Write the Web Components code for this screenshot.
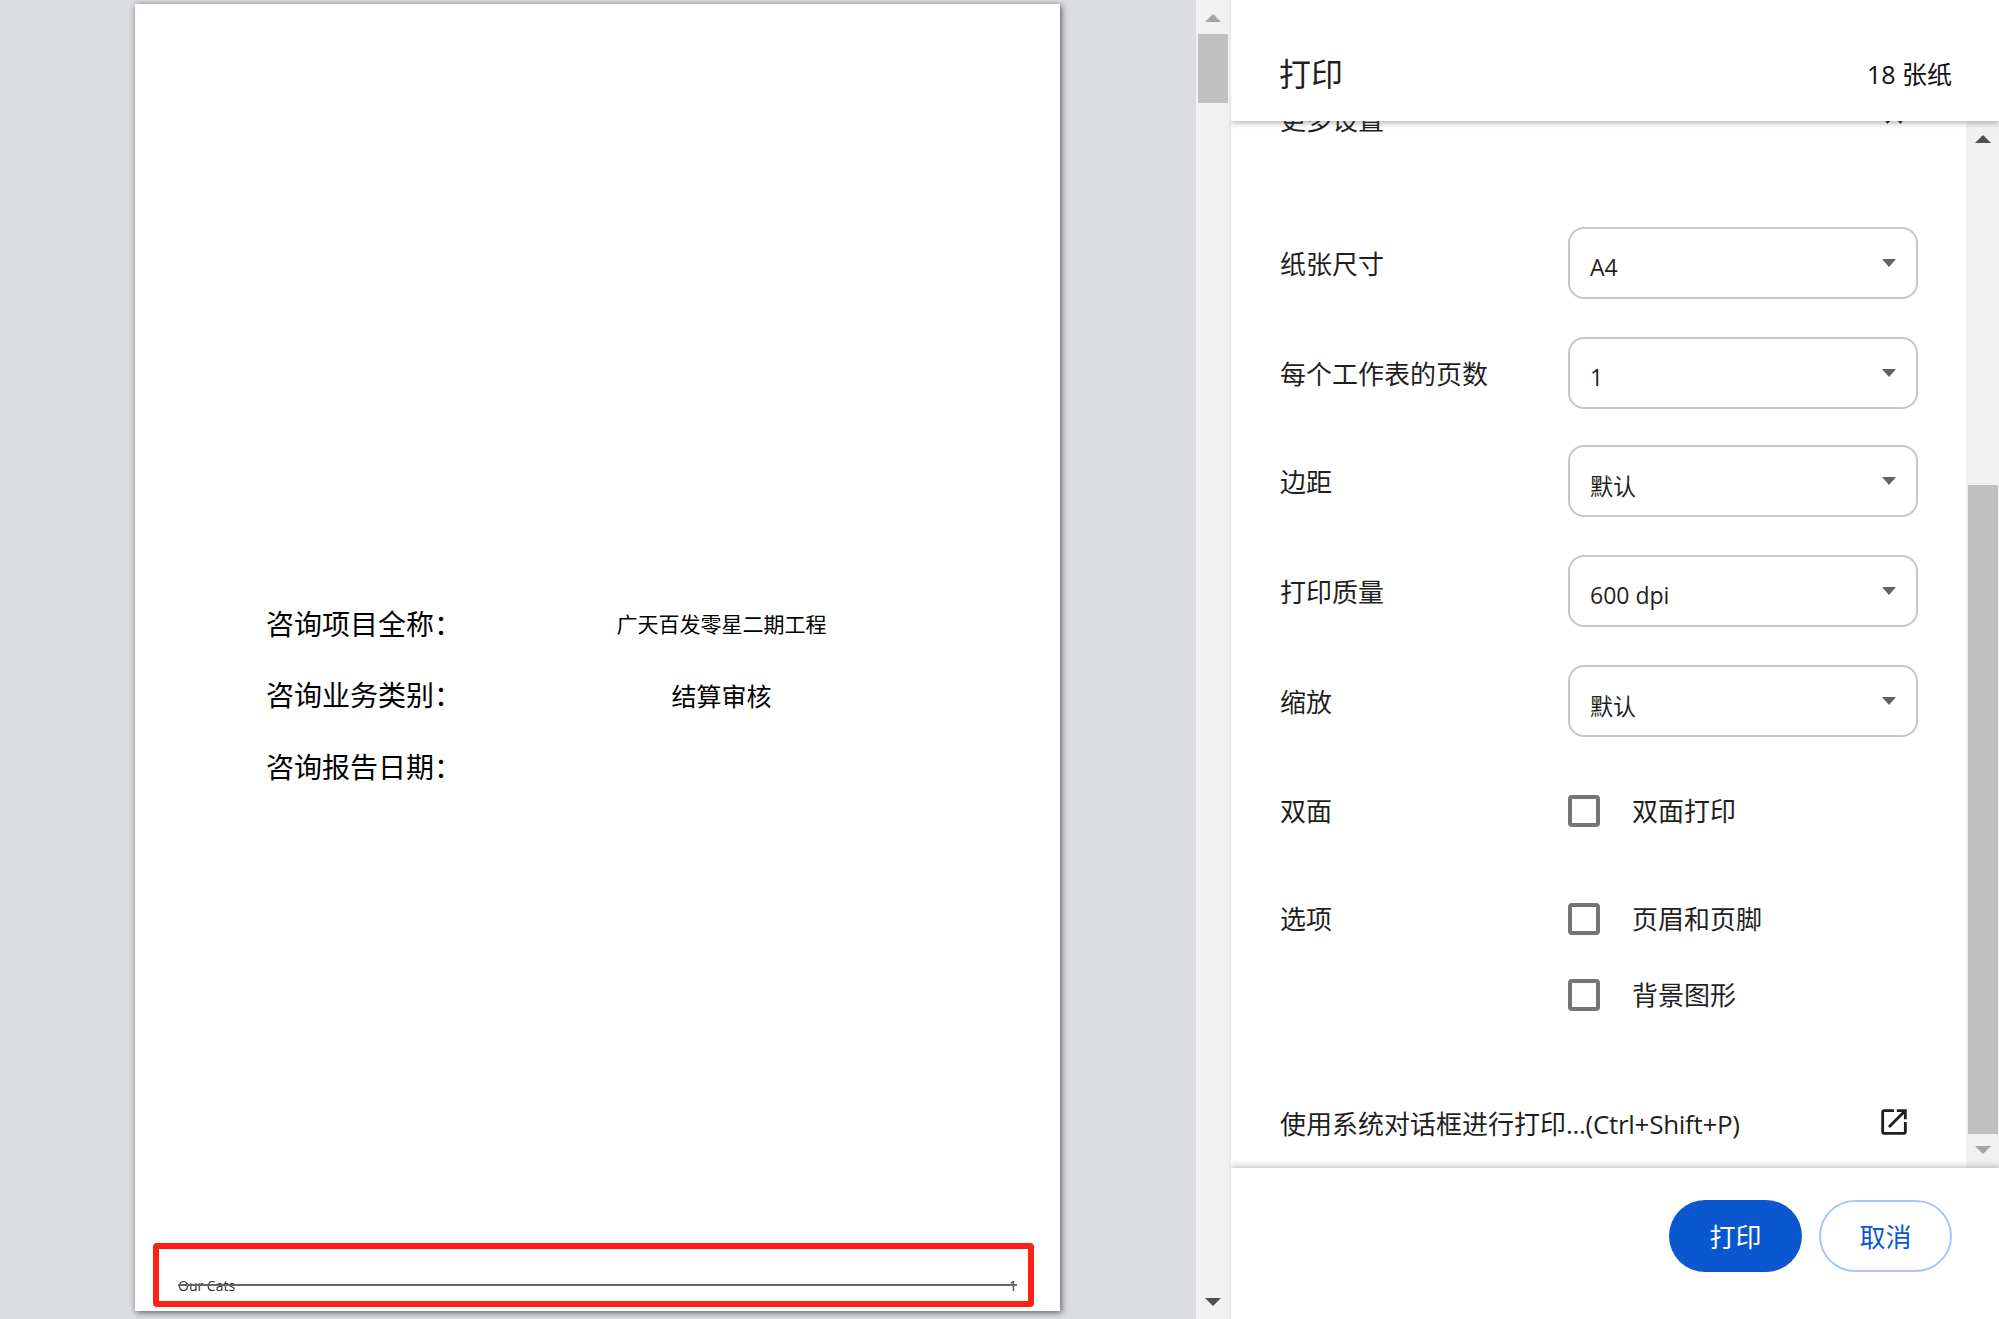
<!DOCTYPE html>
<html lang="zh-CN">
<head>
<meta charset="utf-8">
<title>打印</title>
<style>
    html, body { margin: 0; height: 100%; overflow: hidden; }
    body {
        font-family: "Open Sans", "Noto Sans CJK SC", sans-serif;
        color: #1f1f1f;
    }
</style>
</head>
<body>
<print-app></print-app>
<script>
class ScrollRail extends HTMLElement {
    connectedCallback() {
        const top = this.getAttribute('thumb-top');
        const height = this.getAttribute('thumb-height');
        const upColor = this.getAttribute('up-color');
        const downColor = this.getAttribute('down-color');
        this.attachShadow({ mode: 'open' }).innerHTML = `
            <style>
                :host {
                    display: flex;
                    flex-direction: column;
                    align-items: center;
                    position: relative;
                    background: #f1f1f1;
                    box-sizing: border-box;
                }
                .thumb {
                    width: 30px;
                    height: ${height}px;
                    margin-top: ${top}px;
                    background: #c1c1c1;
                }
                .arrow {
                    position: absolute;
                    left: 50%;
                    width: 16px;
                    height: 8px;
                    margin-left: -8px;
                }
                .up { top: var(--arrow-up, 14px); }
                .down { bottom: var(--arrow-down, 13px); }
            </style>
            <div class="thumb"></div>
            <svg class="arrow up" viewBox="0 0 16 8"><path d="M8 0l8 8H0z" fill="${upColor}"/></svg>
            <svg class="arrow down" viewBox="0 0 16 8"><path d="M0 0h16l-8 8z" fill="${downColor}"/></svg>
        `;
    }
}
customElements.define('scroll-rail', ScrollRail);

class SheetPage extends HTMLElement {
    connectedCallback() {
        this.attachShadow({ mode: 'open' }).innerHTML = `
            <style>
                :host {
                    display: flex;
                    flex-direction: column;
                    position: relative;
                    width: 925px;
                    height: 1307px;
                    background: #fff;
                    color: #000;
                    box-shadow: 2px 2px 6px rgba(0, 0, 0, .45), 0 0 6px rgba(0, 0, 0, .2);
                    font-family: "Noto Sans CJK SC", sans-serif;
                }
                .cover {
                    display: grid;
                    grid-template-columns: 179px 553px;
                    grid-auto-rows: 71.5px;
                    align-items: center;
                    margin: 583px 0 0 131px;
                    font-size: 28px;
                    line-height: 72px;
                }
                .value { text-align: center; white-space: nowrap; }
                .small { font-size: 21px; }
                .mid { font-size: 25px; margin-top: 2px; }
                .label { white-space: nowrap; }
                .foot {
                    position: relative;
                    display: flex;
                    justify-content: space-between;
                    margin: auto 43px 14px 43px;
                    font-family: "Open Sans", sans-serif;
                    font-size: 14px;
                    line-height: 22px;
                    color: #333;
                }
                .foot i {
                    position: absolute;
                    left: 0;
                    right: 0;
                    top: 9px;
                    height: 2px;
                    background: #666;
                }
                .mark {
                    position: absolute;
                    left: 18px;
                    top: 1239px;
                    width: 881px;
                    height: 64px;
                    box-sizing: border-box;
                    border: 6px solid #ff2015;
                    border-radius: 4px;
                }
            </style>
            <div class="cover">
                <div class="label">咨询项目全称：</div><div class="value small">广天百发零星二期工程</div>
                <div class="label">咨询业务类别：</div><div class="value mid">结算审核</div>
                <div class="label">咨询报告日期：</div><div class="value"></div>
            </div>
            <div class="foot"><span>Our Cats</span><span>1</span><i></i></div>
            <div class="mark"></div>
        `;
    }
}
customElements.define('sheet-page', SheetPage);

class SelectRow extends HTMLElement {
    connectedCallback() {
        this.attachShadow({ mode: 'open' }).innerHTML = `
            <style>
                :host {
                    display: grid;
                    grid-template-columns: 288px 350px;
                    align-items: center;
                    height: 72px;
                    margin-bottom: 38px;
                }
                .label { font-size: 26px; line-height: 36px; margin-top: 2px; }
                .box {
                    display: flex;
                    align-items: center;
                    justify-content: space-between;
                    box-sizing: border-box;
                    height: 72px;
                    padding: 8px 20px 0 20px;
                    border: 2px solid #c4c7c5;
                    border-radius: 16px;
                    font-size: 23px;
                }
                svg { width: 14px; height: 8px; margin-top: -9px; }
            </style>
            <div class="label">${this.getAttribute('label')}</div>
            <div class="box"><span><slot></slot></span>
                <svg viewBox="0 0 14 8"><path d="M0 0h14l-7 8z" fill="#5f6368"/></svg>
            </div>
        `;
    }
}
customElements.define('select-row', SelectRow);

class CheckRow extends HTMLElement {
    connectedCallback() {
        this.attachShadow({ mode: 'open' }).innerHTML = `
            <style>
                :host {
                    display: grid;
                    grid-template-columns: 288px 32px 1fr;
                    align-items: center;
                    height: 32px;
                    font-size: 26px;
                    line-height: 36px;
                }
                .box {
                    box-sizing: border-box;
                    width: 32px;
                    height: 32px;
                    border: 4px solid #757575;
                    border-radius: 4px;
                }
                .text { margin-left: 32px; white-space: nowrap; }
            </style>
            <div>${this.getAttribute('label') || ''}</div>
            <div class="box"></div>
            <div class="text"><slot></slot></div>
        `;
    }
}
customElements.define('check-row', CheckRow);

class SettingsPanel extends HTMLElement {
    connectedCallback() {
        this.attachShadow({ mode: 'open' }).innerHTML = `
            <style>
                :host {
                    display: flex;
                    flex-direction: column;
                    flex: 1;
                    min-width: 0;
                    overflow: hidden;
                    background: #fff;
                    color: #1f1f1f;
                    font-family: "Open Sans", "Noto Sans CJK SC", sans-serif;
                }
                header {
                    position: relative;
                    z-index: 2;
                    flex: none;
                    display: flex;
                    align-items: center;
                    justify-content: space-between;
                    box-sizing: border-box;
                    height: 121px;
                    padding: 27px 47px 0 48px;
                    background: #fff;
                    box-shadow: 0 2px 6px rgba(60, 64, 67, .4);
                }
                h1 { margin: 0; font-size: 32px; font-weight: 400; line-height: 44px; }
                .count { font-size: 25px; line-height: 36px; white-space: nowrap; color: #111; }
                .middle {
                    flex: 1;
                    display: flex;
                    min-height: 0;
                    overflow: hidden;
                }
                .scroller {
                    flex: 1;
                    min-width: 0;
                    padding-left: 49px;
                    overflow: hidden;
                }
                .more {
                    display: flex;
                    align-items: center;
                    justify-content: space-between;
                    height: 40px;
                    width: 638px;
                    margin: -22px 0 88px;
                    font-size: 26px;
                }
                .more svg { width: 34px; height: 34px; margin-right: 7px; }
                .tight { margin-bottom: 36px; }
                .gap-a { margin-top: 56px; }
                .gap-b { margin-top: 76px; }
                .gap-c { margin-top: 44px; }
                .system {
                    display: flex;
                    align-items: center;
                    justify-content: space-between;
                    width: 638px;
                    height: 40px;
                    margin-top: 94px;
                    font-size: 26px;
                    white-space: nowrap;
                }
                .system b { font-weight: 400; letter-spacing: -.3px; }
                .system svg { width: 34px; height: 34px; margin: 0 7px 2px 0; }
                scroll-rail { flex: none; width: 33px; padding-left: 1px; --arrow-up: 14px; --arrow-down: 14px; }
                footer {
                    position: relative;
                    z-index: 2;
                    flex: none;
                    display: flex;
                    justify-content: flex-end;
                    gap: 17px;
                    box-sizing: border-box;
                    height: 151px;
                    padding: 32px 47px 0 0;
                    background: #fff;
                    box-shadow: 0 -2px 6px rgba(60, 64, 67, .3);
                }
                .btn {
                    box-sizing: border-box;
                    width: 133px;
                    height: 72px;
                    border-radius: 36px;
                    display: flex;
                    align-items: center;
                    justify-content: center;
                    font-size: 26px;
                }
                .primary { background: #0b57d0; color: #fff; }
                .ghost { border: 2px solid #a8c7fa; color: #0b57d0; }
            </style>
            <header><h1>打印</h1><span class="count">18 张纸</span></header>
            <div class="middle">
                <div class="scroller">
                    <div class="more"><span>更多设置</span>
                        <svg viewBox="0 0 24 24"><path d="M12 8l-6 6 1.41 1.41L12 10.83l4.59 4.58L18 14z" fill="#1f1f1f"/></svg>
                    </div>
                    <select-row label="纸张尺寸">A4</select-row>
                    <select-row class="tight" label="每个工作表的页数">1</select-row>
                    <select-row label="边距">默认</select-row>
                    <select-row label="打印质量">600 dpi</select-row>
                    <select-row label="缩放">默认</select-row>
                    <check-row class="gap-a" label="双面">双面打印</check-row>
                    <check-row class="gap-b" label="选项">页眉和页脚</check-row>
                    <check-row class="gap-c">背景图形</check-row>
                    <div class="system"><span>使用系统对话框进行打印<b>...(Ctrl+Shift+P)</b></span>
                        <svg viewBox="0 0 24 24"><path d="M19 19H5V5h7V3H5c-1.11 0-2 .9-2 2v14c0 1.1.89 2 2 2h14c1.1 0 2-.9 2-2v-7h-2v7zM14 3v2h3.59l-9.83 9.83 1.41 1.41L19 6.41V10h2V3h-7z" fill="#1f1f1f"/></svg>
                    </div>
                </div>
                <scroll-rail thumb-top="364" thumb-height="649" up-color="#505050" down-color="#a3a3a3"></scroll-rail>
            </div>
            <footer><div class="btn primary">打印</div><div class="btn ghost">取消</div></footer>
        `;
    }
}
customElements.define('settings-panel', SettingsPanel);

class PrintApp extends HTMLElement {
    connectedCallback() {
        this.attachShadow({ mode: 'open' }).innerHTML = `
            <style>
                :host {
                    display: flex;
                    width: 100%;
                    height: 1319px;
                }
                .preview {
                    flex: none;
                    display: flex;
                    justify-content: center;
                    box-sizing: border-box;
                    width: 1196px;
                    padding: 4px 1px 0 0;
                    background: #dadce0;
                    overflow: hidden;
                }
                scroll-rail {
                    flex: none;
                    width: 35px;
                    align-items: flex-start;
                    padding-left: 2px;
                    border-right: 2px solid #e8e8ea;
                }
            </style>
            <div class="preview"><sheet-page></sheet-page></div>
            <scroll-rail thumb-top="34" thumb-height="69" up-color="#a3a3a3" down-color="#505050"></scroll-rail>
            <settings-panel></settings-panel>
        `;
    }
}
customElements.define('print-app', PrintApp);
</script>
</body>
</html>
